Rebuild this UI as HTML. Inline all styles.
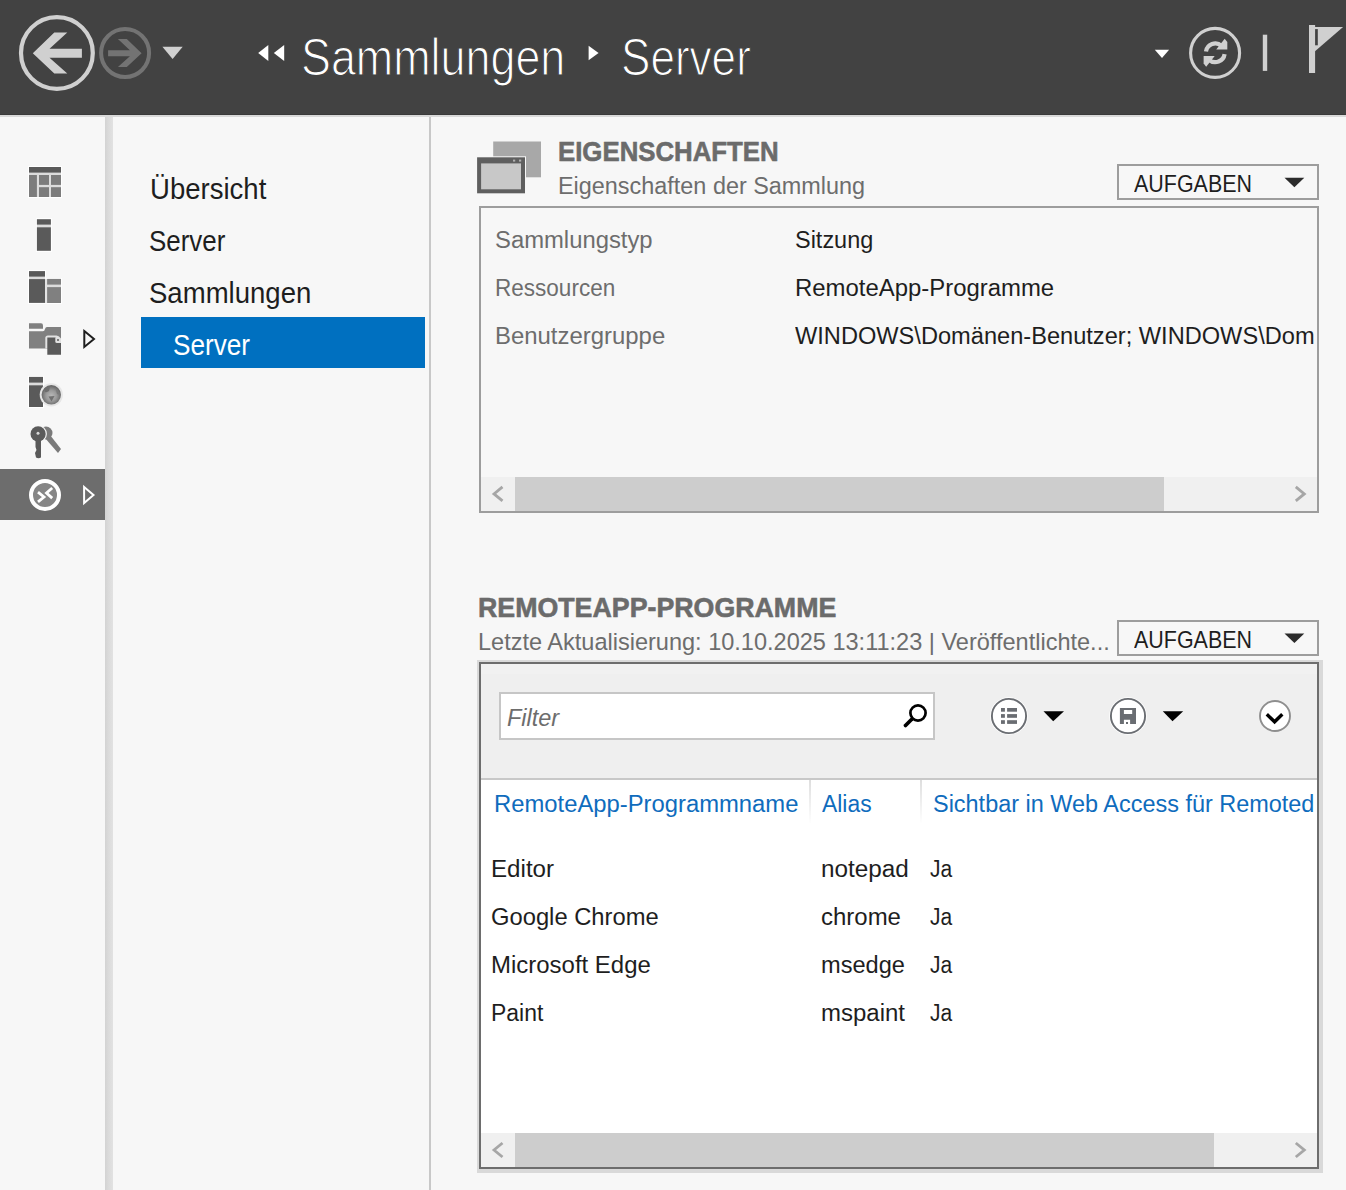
<!DOCTYPE html>
<html><head><meta charset="utf-8"><style>
html,body{margin:0;padding:0;}
body{width:1346px;height:1190px;overflow:hidden;position:relative;background:#f7f7f7;font-family:"Liberation Sans",sans-serif;}
.t{position:absolute;white-space:nowrap;line-height:normal;transform-origin:0 0;}
.b{position:absolute;}
.clip{position:absolute;overflow:hidden;}
svg{position:absolute;overflow:visible;}
</style></head><body>
<div class="b" style="left:0px;top:0px;width:1346px;height:114px;background:#424242"></div>
<div class="b" style="left:0px;top:114px;width:1346px;height:1px;background:#3a3a3a"></div>
<div class="b" style="left:0px;top:115px;width:1346px;height:2px;background:#d9d9d9"></div>
<div class="b" style="left:105px;top:117px;width:8px;height:1073px;background:linear-gradient(to right,#d3d3d3,#dadada 40%,#e2e2e2)"></div>
<div class="b" style="left:429px;top:117px;width:2px;height:1073px;background:#c8c8c8"></div>
<div class="b" style="left:0px;top:469px;width:105px;height:51px;background:#6d6d6d"></div>
<div class="b" style="left:141px;top:317px;width:284px;height:51px;background:#0070c0"></div>
<div class="t" style="left:300.80px;top:27.60px;font-size:51.16px;font-weight:normal;font-style:normal;color:#ffffff;transform:scaleX(0.8768);-webkit-text-stroke:1.2px #424242;">Sammlungen</div>
<div class="t" style="left:621.20px;top:27.80px;font-size:51.16px;font-weight:normal;font-style:normal;color:#ffffff;transform:scaleX(0.8615);-webkit-text-stroke:1.2px #424242;">Server</div>
<div class="t" style="left:149.50px;top:172.00px;font-size:29.36px;font-weight:normal;font-style:normal;color:#1e1e1e;transform:scaleX(0.9378);">Übersicht</div>
<div class="t" style="left:149.00px;top:224.00px;font-size:29.36px;font-weight:normal;font-style:normal;color:#1e1e1e;transform:scaleX(0.8824);">Server</div>
<div class="t" style="left:149.00px;top:276.00px;font-size:29.36px;font-weight:normal;font-style:normal;color:#1e1e1e;transform:scaleX(0.9382);">Sammlungen</div>
<div class="t" style="left:173.30px;top:328.00px;font-size:29.36px;font-weight:normal;font-style:normal;color:#ffffff;transform:scaleX(0.8905);">Server</div>
<div class="t" style="left:557.90px;top:134.90px;font-size:28.49px;font-weight:bold;font-style:normal;color:#6b6b6b;transform:scaleX(0.9054);-webkit-text-stroke:0.6px #6b6b6b;">EIGENSCHAFTEN</div>
<div class="t" style="left:557.60px;top:171.80px;font-size:23.98px;font-weight:normal;font-style:normal;color:#6d6d6d;transform:scaleX(0.9767);">Eigenschaften der Sammlung</div>
<div class="b" style="left:1117px;top:164px;width:202px;height:36px;border:2px solid #9d9d9d;box-sizing:border-box"></div>
<div class="t" style="left:1134.30px;top:169.90px;font-size:24.13px;font-weight:normal;font-style:normal;color:#1e1e1e;transform:scaleX(0.8890);">AUFGABEN</div>
<div class="b" style="left:479px;top:206px;width:840px;height:307px;border:2px solid #9d9d9d;box-sizing:border-box"></div>
<div class="t" style="left:494.60px;top:226.00px;font-size:24.42px;font-weight:normal;font-style:normal;color:#6d6d6d;transform:scaleX(0.9764);">Sammlungstyp</div>
<div class="t" style="left:494.60px;top:274.00px;font-size:24.42px;font-weight:normal;font-style:normal;color:#6d6d6d;transform:scaleX(0.9233);">Ressourcen</div>
<div class="t" style="left:494.60px;top:322.00px;font-size:24.42px;font-weight:normal;font-style:normal;color:#6d6d6d;transform:scaleX(0.9801);">Benutzergruppe</div>
<div class="t" style="left:794.60px;top:226.00px;font-size:24.42px;font-weight:normal;font-style:normal;color:#1e1e1e;transform:scaleX(0.9615);">Sitzung</div>
<div class="t" style="left:794.60px;top:274.00px;font-size:24.42px;font-weight:normal;font-style:normal;color:#1e1e1e;transform:scaleX(0.9798);">RemoteApp-Programme</div>
<div class="clip" style="left:481px;top:300px;width:834px;height:60px"><div class="t" style="left:313.60px;top:22.00px;font-size:24.42px;font-weight:normal;font-style:normal;color:#1e1e1e;transform:scaleX(0.9675);">WINDOWS\Domänen-Benutzer; WINDOWS\Domänen-Benutzer</div></div>
<div class="b" style="left:481px;top:477px;width:836px;height:34px;background:#f0f0f0"></div>
<div class="b" style="left:515px;top:477px;width:649px;height:34px;background:#cdcdcd"></div>
<div class="t" style="left:477.90px;top:590.80px;font-size:28.20px;font-weight:bold;font-style:normal;color:#6b6b6b;transform:scaleX(0.9493);-webkit-text-stroke:0.6px #6b6b6b;">REMOTEAPP-PROGRAMME</div>
<div class="t" style="left:477.60px;top:627.50px;font-size:24.13px;font-weight:normal;font-style:normal;color:#6d6d6d;transform:scaleX(0.9751);">Letzte Aktualisierung: 10.10.2025 13:11:23 | Veröffentlichte...</div>
<div class="b" style="left:1117px;top:620px;width:202px;height:36px;border:2px solid #9d9d9d;box-sizing:border-box"></div>
<div class="t" style="left:1134.30px;top:625.90px;font-size:24.13px;font-weight:normal;font-style:normal;color:#1e1e1e;transform:scaleX(0.8890);">AUFGABEN</div>
<div class="b" style="left:477px;top:660px;width:846px;height:513px;background:#d9d9d9"></div>
<div class="b" style="left:479px;top:662px;width:840px;height:507px;border:2px solid #6d6d6d;box-sizing:border-box;background:#ffffff"></div>
<div class="b" style="left:481px;top:664px;width:836px;height:114px;background:#efefef"></div>
<div class="b" style="left:481px;top:664px;width:836px;height:10px;background:#f1f1f1"></div>
<div class="b" style="left:481px;top:778px;width:836px;height:2px;background:#c8c8c8"></div>
<div class="b" style="left:499px;top:692px;width:436px;height:48px;border:2px solid #c6c6c6;box-sizing:border-box;background:#fff"></div>
<div class="t" style="left:506.50px;top:704.00px;font-size:24.42px;font-weight:normal;font-style:italic;color:#6d6d6d;transform:scaleX(0.9621);">Filter</div>
<div class="t" style="left:493.70px;top:790.00px;font-size:24.42px;font-weight:normal;font-style:normal;color:#0f6cbd;transform:scaleX(0.9758);">RemoteApp-Programmname</div>
<div class="t" style="left:822.30px;top:790.00px;font-size:24.42px;font-weight:normal;font-style:normal;color:#0f6cbd;transform:scaleX(0.9369);">Alias</div>
<div class="clip" style="left:920px;top:780px;width:397px;height:60px"><div class="t" style="left:13.00px;top:10.00px;font-size:24.42px;font-weight:normal;font-style:normal;color:#0f6cbd;transform:scaleX(0.9607);">Sichtbar in Web Access für Remoted</div></div>
<div class="b" style="left:809px;top:780px;width:2px;height:44px;background:linear-gradient(#dedede,#ffffff)"></div>
<div class="b" style="left:920px;top:780px;width:2px;height:44px;background:linear-gradient(#dedede,#ffffff)"></div>
<div class="t" style="left:490.70px;top:854.60px;font-size:24.42px;font-weight:normal;font-style:normal;color:#1e1e1e;transform:scaleX(0.9893);">Editor</div>
<div class="t" style="left:820.60px;top:854.60px;font-size:24.42px;font-weight:normal;font-style:normal;color:#1e1e1e;transform:scaleX(0.9958);">notepad</div>
<div class="t" style="left:930.40px;top:854.60px;font-size:24.42px;font-weight:normal;font-style:normal;color:#1e1e1e;transform:scaleX(0.8601);">Ja</div>
<div class="t" style="left:490.70px;top:902.60px;font-size:24.42px;font-weight:normal;font-style:normal;color:#1e1e1e;transform:scaleX(0.9735);">Google Chrome</div>
<div class="t" style="left:820.60px;top:902.60px;font-size:24.42px;font-weight:normal;font-style:normal;color:#1e1e1e;transform:scaleX(0.9824);">chrome</div>
<div class="t" style="left:930.40px;top:902.60px;font-size:24.42px;font-weight:normal;font-style:normal;color:#1e1e1e;transform:scaleX(0.8601);">Ja</div>
<div class="t" style="left:490.70px;top:950.60px;font-size:24.42px;font-weight:normal;font-style:normal;color:#1e1e1e;transform:scaleX(0.9819);">Microsoft Edge</div>
<div class="t" style="left:820.60px;top:950.60px;font-size:24.42px;font-weight:normal;font-style:normal;color:#1e1e1e;transform:scaleX(0.9668);">msedge</div>
<div class="t" style="left:930.40px;top:950.60px;font-size:24.42px;font-weight:normal;font-style:normal;color:#1e1e1e;transform:scaleX(0.8601);">Ja</div>
<div class="t" style="left:490.70px;top:998.60px;font-size:24.42px;font-weight:normal;font-style:normal;color:#1e1e1e;transform:scaleX(0.9398);">Paint</div>
<div class="t" style="left:820.60px;top:998.60px;font-size:24.42px;font-weight:normal;font-style:normal;color:#1e1e1e;transform:scaleX(0.9826);">mspaint</div>
<div class="t" style="left:930.40px;top:998.60px;font-size:24.42px;font-weight:normal;font-style:normal;color:#1e1e1e;transform:scaleX(0.8601);">Ja</div>
<div class="b" style="left:481px;top:1133px;width:836px;height:34px;background:#f0f0f0"></div>
<div class="b" style="left:515px;top:1133px;width:699px;height:34px;background:#cdcdcd"></div>
<svg width="1346" height="1190" style="left:0;top:0"><circle cx="56.9" cy="53" r="35.9" fill="none" stroke="#d0d0d0" stroke-width="4.2"/><polygon fill="#d0d0d0" points="32.8,53.3 54.3,32.6 67.3,32.6 49.5,48.8 81.9,48.8 81.9,57.7 49.5,57.7 67.3,73.5 54.3,73.5"/><circle cx="125.1" cy="53" r="24" fill="none" stroke="#737373" stroke-width="4"/><polygon fill="#737373" points="141.6,53.2 126.8,39.1 117.9,39.1 129.9,50.3 108.1,50.3 108.1,56.3 129.9,56.3 117.9,66.9 126.8,66.9"/><polygon fill="#d0d0d0" points="162.4,46.8 182.7,46.8 172.6,59"/><polygon fill="#fff" points="258.2,52.9 268.3,45 268.3,60.9"/><polygon fill="#fff" points="273.8,52.9 284.2,45 284.2,60.9"/><polygon fill="#fff" points="588.6,45.8 598.6,53 588.6,60.3"/><polygon fill="#fff" points="1154.8,49.7 1169.1,49.7 1162,58.1"/><circle cx="1215.1" cy="52.9" r="24.5" fill="none" stroke="#d0d0d0" stroke-width="3.1"/><g fill="none" stroke="#d0d0d0" stroke-width="4.2"><path d="M1206,51.5 A9.4,9.4 0 0 1 1221.5,45.8"/><path d="M1224.6,54.1 A9.4,9.4 0 0 1 1209.1,59.8"/></g><polygon fill="#d0d0d0" points="1224.7,38.8 1227.3,42 1227.3,49.6 1216.2,49.6"/><polygon fill="#d0d0d0" points="1206.2,66.8 1203.6,63.6 1203.6,56 1214.7,56"/><rect x="1262.8" y="34.7" width="4.4" height="36.2" fill="#d0d0d0"/><rect x="1309" y="25" width="6.1" height="48" fill="#d0d0d0"/><polygon fill="#d0d0d0" points="1315,27.1 1343.1,27.1 1315,51.2"/><rect x="1315.1" y="29.1" width="2.7" height="16.2" fill="#424242"/><rect x="28" y="166" width="34" height="32" fill="#ffffff"/><rect x="29" y="172" width="32" height="25" fill="#dcdcdc"/><rect x="35.9" y="218.2" width="16" height="33.6" fill="#ffffff"/><rect x="36.9" y="224" width="14" height="3.8" fill="#dcdcdc"/><rect x="28" y="270.1" width="18" height="33.8" fill="#ffffff"/><rect x="46.1" y="277.9" width="15.9" height="26" fill="#ffffff"/><rect x="29" y="276" width="16" height="3.5" fill="#dcdcdc"/><rect x="45" y="279" width="2.2" height="24" fill="#e4e4e4"/><rect x="47.1" y="284" width="13.9" height="3.5" fill="#dcdcdc"/><rect x="28" y="375.9" width="16" height="32.1" fill="#ffffff"/><rect x="29" y="382" width="14" height="3.8" fill="#dcdcdc"/><rect x="29" y="167" width="32" height="5.6" fill="#5a5a5a"/><rect x="29" y="175" width="7.9" height="22" fill="#7c7c7c"/><rect x="39" y="175" width="10" height="9.9" fill="#7c7c7c"/><rect x="51" y="175" width="10" height="9.9" fill="#7c7c7c"/><rect x="39" y="187.2" width="10" height="9.8" fill="#7c7c7c"/><rect x="51" y="187.2" width="10" height="9.8" fill="#7c7c7c"/><rect x="36.9" y="219.2" width="14" height="5.4" fill="#5a5a5a"/><rect x="36.9" y="227.3" width="14" height="23.5" fill="#5a5a5a"/><rect x="29" y="271.1" width="16" height="5.5" fill="#5a5a5a"/><rect x="29" y="279.1" width="16" height="23.8" fill="#5a5a5a"/><rect x="47.1" y="278.9" width="13.9" height="5.7" fill="#808080"/><rect x="47.1" y="287.1" width="13.9" height="15.9" fill="#808080"/><path fill="#808080" d="M29,323.2 H41 Q43,323.2 43,325.5 V328.7 H29 Z"/><path fill="#808080" d="M29,331.2 H43 Q44.5,331.2 45,329 Q45.5,327 47,327 H61 V348.6 H29 Z"/><path fill="#e2e2e2" d="M45.3,348.6 V338 Q45.3,335.5 48,335.5 H56.5 Q58.5,335.5 61,338.5 V348.6 Z"/><path fill="#5a5a5a" d="M47.3,337.5 H55.5 L61,342 V354.7 H47.3 Z"/><path fill="#e2e2e2" d="M55.3,337.5 V341.5 Q55.3,343 57,343 H61 V341.2 L56.5,337.5 Z"/><circle cx="58" cy="340" r="1" fill="#5a5a5a"/><polygon fill="none" stroke="#1e1e1e" stroke-width="2" points="84.3,331 94,339 84.3,347"/><rect x="29" y="376.9" width="14" height="5.7" fill="#5a5a5a"/><rect x="29" y="385.3" width="14" height="21.7" fill="#5a5a5a"/><circle cx="51.3" cy="394.8" r="11.6" fill="#e6e6e6"/><defs><radialGradient id="gl" cx="0.5" cy="0.55" r="0.5"><stop offset="0" stop-color="#b8b8b8"/><stop offset="0.55" stop-color="#9a9a9a"/><stop offset="1" stop-color="#6a6a6a"/></radialGradient></defs><circle cx="51.3" cy="394.8" r="9.7" fill="url(#gl)"/><path fill="#6e6e6e" d="M44.5,388.5 Q47,386 50,386.5 L49,391 Q47,392.5 45,392 Z"/><path fill="#707070" d="M48.5,396.5 L54.5,396 L51.5,401.5 Z"/><path fill="#7a7a7a" d="M55.5,388 Q59.5,391 60,395 L57,394 Z"/><g fill="#7a7a7a"><circle cx="46" cy="433" r="6.5"/><path d="M45,438 L50,435 L61,449 L58,453 Z"/></g><circle cx="38.1" cy="433.9" r="8.8" fill="#f7f7f7"/><g fill="#5a5a5a"><circle cx="38.1" cy="433.9" r="7.6"/><path d="M35.5,440 H41 V457.5 Q38.5,459 36,457.5 L35,453 L36.5,450 L35.5,447 Z"/></g><circle cx="38" cy="433.3" r="1.5" fill="#d8d8d8"/><circle cx="45" cy="495" r="14" fill="#868686" stroke="#fff" stroke-width="4"/><polyline fill="none" stroke="#fff" stroke-width="2.8" points="38,492.1 44,497 38,501.9"/><polyline fill="none" stroke="#fff" stroke-width="2.8" points="52.2,488 46.5,493 52.2,498.1"/><polygon fill="none" stroke="#fff" stroke-width="2" points="84.1,487 93.5,495 84.1,503"/><rect x="493.2" y="141.5" width="47.8" height="35.8" fill="#a8a8a8"/><rect x="476.1" y="156.3" width="49.9" height="38" fill="#f7f7f7"/><rect x="477.1" y="157.3" width="47.9" height="36" fill="#5f5f5f"/><rect x="481.1" y="163.4" width="39.9" height="25.9" fill="#c8c8c8"/><rect x="513" y="159.6" width="2.2" height="2" fill="#b0b0b0"/><rect x="519" y="159.6" width="2.2" height="2" fill="#b0b0b0"/><polygon fill="#2b2b2b" points="1284.5,177.7 1304.3,177.7 1294.4,187.3"/><polygon fill="#2b2b2b" points="1284.5,633.5 1304.3,633.5 1294.4,643.1"/><polyline fill="none" stroke="#a6a6a6" stroke-width="2.8" stroke-linejoin="miter" points="502.5,486.9 494,493.9 502.5,500.9"/><polyline fill="none" stroke="#a6a6a6" stroke-width="2.8" stroke-linejoin="miter" points="1295.8,486.9 1304.3,493.9 1295.8,500.9"/><polyline fill="none" stroke="#a6a6a6" stroke-width="2.8" stroke-linejoin="miter" points="502.5,1143.0 494,1150.0 502.5,1157.0"/><polyline fill="none" stroke="#a6a6a6" stroke-width="2.8" stroke-linejoin="miter" points="1295.8,1143.0 1304.3,1150.0 1295.8,1157.0"/><circle cx="918" cy="713" r="7.6" fill="none" stroke="#000" stroke-width="2.7"/><line x1="912" y1="719" x2="905.5" y2="725.5" stroke="#000" stroke-width="3.8" stroke-linecap="round"/><circle cx="1009" cy="716" r="18.8" fill="#fff"/><circle cx="1009" cy="716" r="17.1" fill="#fff" stroke="#6a6d72" stroke-width="1.9"/><rect x="1001" y="708" width="3.9" height="3.7" fill="#6a6d72"/><rect x="1007.1" y="708" width="9.9" height="3.7" fill="#6a6d72"/><rect x="1001" y="714.1" width="3.9" height="3.7" fill="#6a6d72"/><rect x="1007.1" y="714.1" width="9.9" height="3.7" fill="#6a6d72"/><rect x="1001" y="720.2" width="3.9" height="3.7" fill="#6a6d72"/><rect x="1007.1" y="720.2" width="9.9" height="3.7" fill="#6a6d72"/><polygon fill="#000" points="1043.5,711.3 1064,711.3 1053.2,721.3"/><circle cx="1128" cy="716" r="18.8" fill="#fff"/><circle cx="1128" cy="716" r="17.1" fill="#fff" stroke="#6a6d72" stroke-width="1.9"/><path fill="#6a6d72" fill-rule="evenodd" d="M1119.9,707.9 H1136 V724 H1130.1 V719.7 H1123.9 V724 H1119.9 Z M1123.9,709.9 V714.1 H1132.2 V709.9 Z"/><rect x="1126" y="722" width="2" height="2" fill="#6a6d72"/><polygon fill="#000" points="1162.8,711.3 1183.2,711.3 1172.5,721.3"/><circle cx="1275" cy="716" r="15" fill="#fff" stroke="#8e8e8e" stroke-width="1.9"/><polyline fill="none" stroke="#000" stroke-width="3.4" points="1266.8,714.2 1274.6,721.8 1282.3,714.2"/></svg>
</body></html>
